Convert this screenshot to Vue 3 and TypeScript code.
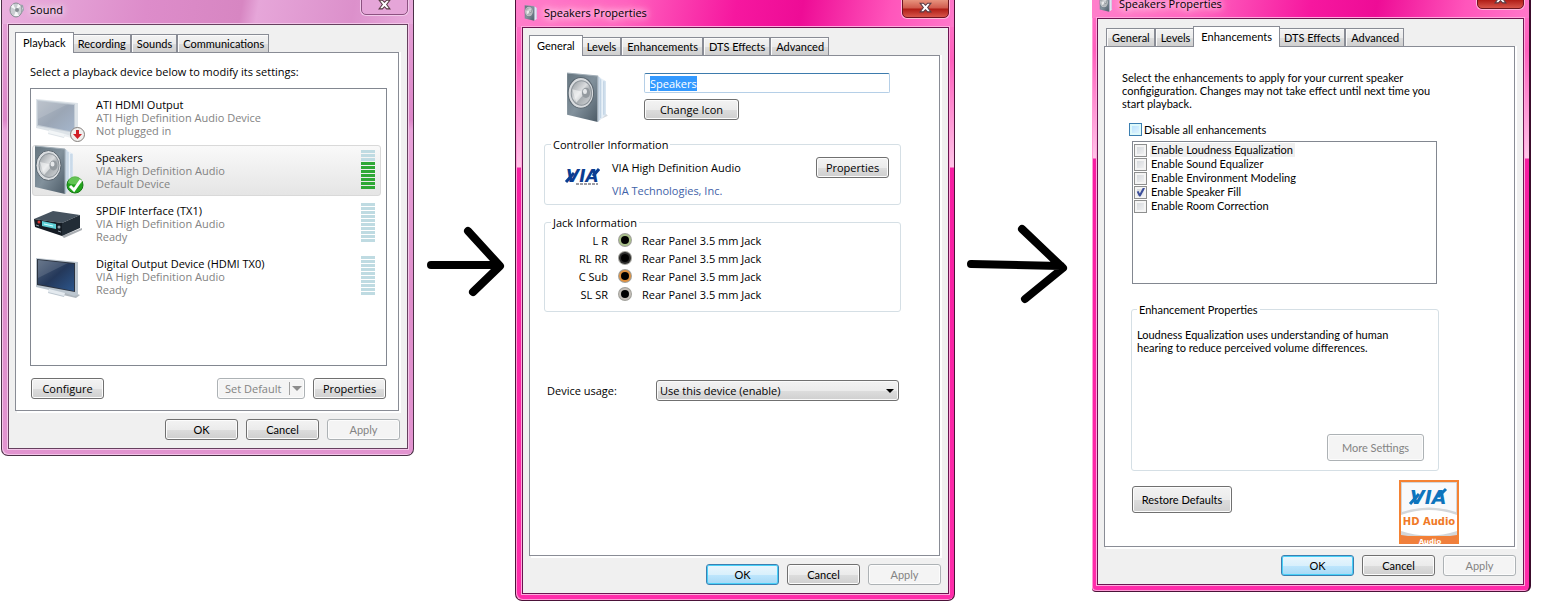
<script setup lang="ts">
import { onMounted, ref } from 'vue'

type Theme = 'orchid' | 'hot'
type Body = 'playback' | 'general' | 'enhancements'
interface Dialog { id: Body; title: string; theme: Theme; tabs: string[]; active: string; ready: boolean }
interface Device { icon: string; name: string; driver: string; state: string; level: number | null; selected?: boolean }

const propertyTabs = ['General', 'Levels', 'Enhancements', 'DTS Effects', 'Advanced']
const dialogs: Dialog[] = [
  { id: 'playback', title: 'Sound', theme: 'orchid', tabs: ['Playback', 'Recording', 'Sounds', 'Communications'], active: 'Playback', ready: false },
  { id: 'general', title: 'Speakers Properties', theme: 'hot', tabs: propertyTabs, active: 'General', ready: true },
  { id: 'enhancements', title: 'Speakers Properties', theme: 'hot', tabs: propertyTabs, active: 'Enhancements', ready: true },
]
const devices: Device[] = [
  { icon: 'unplugged', name: 'ATI HDMI Output', driver: 'ATI High Definition Audio Device', state: 'Not plugged in', level: null },
  { icon: 'speaker', name: 'Speakers', driver: 'VIA High Definition Audio', state: 'Default Device', level: 7, selected: true },
  { icon: 'receiver', name: 'SPDIF Interface (TX1)', driver: 'VIA High Definition Audio', state: 'Ready', level: 0 },
  { icon: 'monitor', name: 'Digital Output Device (HDMI TX0)', driver: 'VIA High Definition Audio', state: 'Ready', level: 0 },
]
const jacks = [
  { label: 'L R', color: '#a9c08a' },
  { label: 'RL RR', color: '#2b2b2b' },
  { label: 'C Sub', color: '#e0913f' },
  { label: 'SL SR', color: '#c4beb8' },
]
const effects = ref([
  { name: 'Enable Loudness Equalization', on: false },
  { name: 'Enable Sound Equalizer', on: false },
  { name: 'Enable Environment Modeling', on: false },
  { name: 'Enable Speaker Fill', on: true },
  { name: 'Enable Room Correction', on: false },
])
const disableAll = ref(false)
const deviceName = ref('Speakers')
const usage = ref('enable')
const nameBox = ref<HTMLInputElement[]>([])

onMounted(() => {
  const box = nameBox.value[0]
  box?.focus()
  box?.select()
})
</script>

<template>
  <svg class="defs" aria-hidden="true">
    <defs>
      <linearGradient id="face" x1="0" y1="0" x2="1" y2="1">
        <stop offset="0" stop-color="#65757f" /><stop offset=".5" stop-color="#82919c" /><stop offset="1" stop-color="#4c5b67" />
      </linearGradient>
      <linearGradient id="side" x1="0" y1="0" x2="1" y2="0">
        <stop offset="0" stop-color="#b9cbdc" /><stop offset=".5" stop-color="#eef5fb" /><stop offset="1" stop-color="#cfdeec" />
      </linearGradient>
      <linearGradient id="cone" x1="0" y1="0" x2="1" y2="1">
        <stop offset="0" stop-color="#8f959a" /><stop offset=".45" stop-color="#dcdee0" /><stop offset=".6" stop-color="#a9aeb2" /><stop offset="1" stop-color="#d6d8da" />
      </linearGradient>
      <linearGradient id="screen" x1="0" y1="0" x2="1" y2="1">
        <stop offset="0" stop-color="#54657c" /><stop offset=".5" stop-color="#24385a" /><stop offset="1" stop-color="#2c568c" />
      </linearGradient>
      <linearGradient id="pale" x1="0" y1="0" x2="1" y2="1">
        <stop offset="0" stop-color="#b3bbc5" /><stop offset=".5" stop-color="#9ba6b5" /><stop offset="1" stop-color="#a5b6cc" />
      </linearGradient>
    </defs>
    <symbol id="speaker-art" viewBox="0 0 42 50">
      <path d="M32 47l9-4-2-2z" fill="#d5d9dd" />
      <path d="M31 4l8 5v33l-8 7z" fill="url(#side)" />
      <path d="M34 7v38M37 9v33" stroke="#b9cde0" fill="none" />
      <path d="M1 1l30 3v45L1 42z" fill="url(#face)" />
      <path d="M1 1l30 3v45" fill="none" stroke="#a3afb8" />
      <ellipse cx="14.5" cy="20.5" rx="12.5" ry="15" fill="#d9dcdf" stroke="#59656f" />
      <ellipse cx="15" cy="20.5" rx="10" ry="12" fill="url(#cone)" stroke="#8d949a" />
      <path d="M6 17l13 3-9 10z" fill="#fff" opacity=".5" />
      <ellipse cx="19.5" cy="20.5" rx="4" ry="5" fill="#949a9f" />
      <ellipse cx="18.5" cy="19" rx="2" ry="2.5" fill="#e6e8ea" />
    </symbol>
  </svg>

  <main class="board">
    <template v-for="(d, n) in dialogs" :key="d.id">
      <svg v-if="n === 1" class="arrow" viewBox="414 225 101 75" aria-hidden="true">
        <path d="M431 265h66M468 231l32 35-27 26" />
      </svg>
      <svg v-if="n === 2" class="arrow second" viewBox="955 222 137 85" aria-hidden="true">
        <path d="M971 264l90 2M1022 229l41 39-38 31" />
      </svg>

      <section class="window" :class="[d.theme, d.id]" :aria-label="d.title">
        <header class="title">
          <svg v-if="d.id === 'playback'" class="title-icon" viewBox="0 0 16 16" aria-hidden="true">
            <path d="M9 2l5 1 1 5-3 4-4 1z" fill="#9aa3ab" /><path d="M11 4l3 2-1 4-3 2z" fill="#e9eef2" />
            <ellipse cx="7" cy="8" rx="6" ry="7" fill="#c9cdd1" stroke="#8a9096" />
            <path d="M7 8L2 5l2-3zM7 8l5-4-3-2zM7 8l3 6H5z" fill="#f6f7f8" /><circle cx="8" cy="8" r="2" fill="#868d93" />
          </svg>
          <svg v-else class="title-icon" viewBox="0 0 42 50" aria-hidden="true"><use href="#speaker-art" /></svg>
          <h1>{{ d.title }}</h1>
          <button class="close" type="button" aria-label="Close">
            <svg viewBox="0 0 12 10"><path d="M1 1h3l2 2 2-2h3L8 5l3 4H8L6 7 4 9H1l3-4z" /></svg>
          </button>
        </header>

        <div class="client">
          <div class="tabs" role="tablist">
            <button v-for="t in d.tabs" :key="t" class="tab" :class="{ active: t === d.active }" type="button" role="tab" :aria-selected="t === d.active">{{ t }}</button>
          </div>

          <div v-if="d.id === 'playback'" class="panel sound-panel">
            <p>Select a playback device below to modify its settings:</p>
            <ul class="devices">
              <li v-for="dev in devices" :key="dev.name" class="device" :class="{ selected: dev.selected }">
                <svg class="device-icon" viewBox="0 0 52 50" aria-hidden="true">
                  <template v-if="dev.icon === 'monitor' || dev.icon === 'unplugged'">
                    <path d="M16 36l22 5 8 3-4 3-26-6z" :fill="dev.icon === 'monitor' ? '#8c97a1' : '#e6eaee'" opacity=".7" />
                    <path d="M2 7l42 4v33l-4 1-9-3-1 4-16-4 1-3-13-3z" :fill="dev.icon === 'monitor' ? '#bcc6cf' : '#dde3e8'" />
                    <path d="M15 38l16 4-1 3-16-4z" :fill="dev.icon === 'monitor' ? '#e4eaef' : '#f2f5f7'" />
                    <path d="M3 8l38 4v29L3 34z" :fill="dev.icon === 'monitor' ? '#2b3340' : '#c3ccd5'" />
                    <path d="M4 9l36 4v27L4 33z" :fill="dev.icon === 'monitor' ? 'url(#screen)' : 'url(#pale)'" />
                    <path d="M4 9l30 3L4 27z" fill="#fff" opacity=".12" />
                  </template>
                  <template v-if="dev.icon === 'unplugged'">
                    <circle cx="43.5" cy="42.5" r="7" fill="#f0efee" stroke="#85807d" />
                    <path d="M42 38h3v4h3l-4.500 5-4.500-5h3z" fill="#d01f26" />
                  </template>
                  <template v-if="dev.icon === 'speaker'">
                    <use href="#speaker-art" width="42" height="50" />
                    <circle cx="41" cy="40" r="8" fill="#22a31c" stroke="#157a14" />
                    <path d="M34 38a7 7 0 0 1 14 0q-7 3-14 0z" fill="#8fdc7a" opacity=".6" />
                    <path d="M36 41l4 4 7-10" fill="none" stroke="#fff" stroke-width="3" />
                  </template>
                  <template v-if="dev.icon === 'receiver'">
                    <path d="M28 38l20-8v2l-18 8z" fill="#a9adb2" />
                    <path d="M0 21l19-8 27 4-18 8z" fill="#46535f" />
                    <path d="M28 25l18-8v13l-18 8z" fill="#222c36" />
                    <path d="M0 21l28 4v13L1 29z" fill="#151c24" />
                    <path d="M8 23l14 3v5L8 28z" fill="#5fcfd6" />
                    <path d="M10 26l9 2" stroke="#d9ffff" />
                    <circle cx="5" cy="24" r="1.500" fill="#d8352f" /><circle cx="25" cy="29" r="1.500" fill="#8d9aa5" />
                    <path d="M2 27l3 1M24 33l3 1" stroke="#8d9aa5" />
                  </template>
                </svg>
                <div class="device-text">
                  <strong>{{ dev.name }}</strong><span>{{ dev.driver }}</span><span>{{ dev.state }}</span>
                </div>
                <div v-if="dev.level !== null" class="meter" role="img" aria-label="Output level">
                  <i v-for="b in 10" :key="b" :class="{ lit: b > 10 - dev.level }"></i>
                </div>
              </li>
            </ul>
            <div class="sound-actions">
              <button class="btn" type="button">Configure</button>
              <button class="btn split" type="button" disabled>
                <span>Set Default</span><svg viewBox="0 0 10 6"><path d="M0 0h10L5 5z" /></svg>
              </button>
              <button class="btn" type="button">Properties</button>
            </div>
          </div>

          <div v-if="d.id === 'general'" class="panel general-panel">
            <div class="identity">
              <svg class="big-icon" viewBox="0 0 42 50" aria-hidden="true"><use href="#speaker-art" /></svg>
              <div class="naming">
                <input ref="nameBox" v-model="deviceName" type="text" aria-label="Device name" />
                <button class="btn change" type="button">Change Icon</button>
              </div>
            </div>
            <fieldset class="controller">
              <legend>Controller Information</legend>
              <div class="controller-row">
                <svg class="via" viewBox="0 0 36 22" role="img" aria-label="VIA">
                  <path d="M2 16l8-9M29 10l6-7" stroke="currentColor" stroke-width="3" />
                  <text x="2" y="16" font-size="17" fill="currentColor">VIA</text>
                  <path d="M12 18h22" stroke="#3c3c4a" stroke-dasharray="3 1" />
                </svg>
                <div class="controller-text">
                  <span>VIA High Definition Audio</span>
                  <a href="#">VIA Technologies, Inc.</a>
                </div>
                <button class="btn" type="button">Properties</button>
              </div>
            </fieldset>
            <fieldset class="jacks">
              <legend>Jack Information</legend>
              <div v-for="j in jacks" :key="j.label" class="jack">
                <span class="jack-label">{{ j.label }}</span>
                <svg viewBox="0 0 16 16" aria-hidden="true">
                  <circle cx="8" cy="8" r="7" fill="#77776f" opacity=".7" /><circle cx="8" cy="8" r="6" :fill="j.color" /><circle cx="8" cy="8" r="4" fill="#000" />
                </svg>
                <span>Rear Panel 3.5 mm Jack</span>
              </div>
            </fieldset>
            <div class="usage">
              <label for="usage">Device usage:</label>
              <div class="combo">
                <select id="usage" v-model="usage">
                  <option value="enable">Use this device (enable)</option>
                  <option value="disable">Don't use this device (disable)</option>
                </select>
                <svg viewBox="0 0 8 4" aria-hidden="true"><path d="M0 0h8L4 4z" /></svg>
              </div>
            </div>
          </div>

          <div v-if="d.id === 'enhancements'" class="panel fx-panel">
            <p>Select the enhancements to apply for your current speaker<br />configiguration. Changes may not take effect until next time you<br />start playback.</p>
            <label class="disable-all"><input v-model="disableAll" class="hot-box" type="checkbox" />Disable all enhancements</label>
            <ul class="effects">
              <li v-for="(e, i) in effects" :key="e.name">
                <label><input v-model="e.on" type="checkbox" /><span :class="{ current: i === 0 }">{{ e.name }}</span></label>
              </li>
            </ul>
            <fieldset class="fx-props">
              <legend>Enhancement Properties</legend>
              <p>Loudness Equalization uses understanding of human<br />hearing to reduce perceived volume differences.</p>
              <button class="btn tall" type="button" disabled>More Settings</button>
            </fieldset>
            <div class="fx-foot">
              <button class="btn tall restore" type="button">Restore Defaults</button>
              <svg class="hd" viewBox="0 0 60 64" role="img" aria-label="VIA HD Audio">
                <path d="M0 0h60v64H0z" fill="#f58233" />
                <path d="M2 2h56v54H2z" fill="#d3d6d9" />
                <path d="M3 3h54v29q-27-9-54 0z" fill="#f8f9fb" />
                <path d="M2 35q28-10 56 0v16q-28 9-56 0z" fill="#fff" />
                <path d="M2 55q28 5 56 0v9H2z" fill="#f07f3c" />
                <path d="M11 24l9-10M39 17l8-8" stroke="#0d74bd" stroke-width="3" />
                <text class="mark" x="11" y="24" font-size="19" fill="#0d74bd">VIA</text>
                <text x="30" y="45" text-anchor="middle" font-size="10" fill="#f07a28">HD Audio</text>
                <text x="31" y="64" text-anchor="middle" font-size="7" fill="#fff">Audio</text>
              </svg>
            </div>
          </div>

          <footer class="footer">
            <button class="btn" :class="{ primary: d.ready }" type="button">OK</button>
            <button class="btn" type="button">Cancel</button>
            <button class="btn" type="button" disabled>Apply</button>
          </footer>
        </div>
      </section>
    </template>
  </main>
</template>

<style>
body { margin: 0; background: #fff; }
</style>

<style scoped>
.defs { position: absolute; width: 0; height: 0; }
.board {
  --ui: "Lato", "Liberation Sans", sans-serif;
  --body: "Open Sans", "Noto Sans", sans-serif;
  display: grid;
  grid-template-columns: 413fr 101fr 440fr 137fr 439fr;
  align-items: start;
  padding: 0 18px 0 1px;
  font: 11px/13px var(--body);
  color: #000;
}
p, h1, ul { margin: 0; padding: 0; list-style: none; }
button, input, select { font: inherit; color: inherit; box-sizing: border-box; }
.arrow { width: 100%; margin-top: 225px; fill: none; stroke: #000; stroke-width: 8; stroke-linecap: round; stroke-linejoin: round; }
.arrow.second { margin-top: 222px; }

.window { box-sizing: border-box; min-width: 0; padding: 0 5px 6px 6px; border: 1px solid #4b1238; border-top: 0; border-radius: 0 0 7px 7px; overflow: hidden; }
.orchid { border-color: #4a3046; background: linear-gradient(#e6a4d8, #dc86c8 120px, #e8a2d9 130px, #df8ecb 300px, #e294d0); box-shadow: inset 1px -1px 0 #f3c4e8; }
.hot { background: linear-gradient(#ff78ca, #ff5fbd 60px, #ffc4e8 167px, #f71da2 168px, #ff2caa); box-shadow: inset 1px -1px 0 #ff9bd6; }
.enhancements { padding-left: 5px; border-left: 0; border-right: 2px solid #3c0c2c; border-radius: 0 0 6px 4px; background: linear-gradient(#ff70c6, #ff5fbd 50px, #ffc4e8 158px, #f71da2 159px, #ff2caa); }
.title { display: flex; align-items: flex-end; gap: 5px; box-sizing: border-box; height: 27px; margin: 0 -5px 0 -6px; padding: 0 5px 0 7px; }
.playback .title { height: 24px; background: linear-gradient(100deg, #e9b0de, #dd8cca 35%, #d786c2 58%, #e6a6d9 62%, #dc90cb 85%, #e8abdc); }
.hot .title { background: linear-gradient(100deg, #ff7fcb, #ff62bf 25%, #f6179f 50%, #ee0c96 65%, #ff55bb 85%, #ff78ca); }
.enhancements .title { height: 18px; margin-left: -5px; padding-left: 6px; }
.title-icon { flex: none; width: 16px; height: 16px; margin-bottom: 6px; }
h1 { flex: 1; padding-bottom: 8px; font-size: 11px; font-weight: 400; line-height: 13px; white-space: nowrap; text-shadow: 0 0 6px #fff, 0 0 9px #ffffffb0, 0 0 12px #ffffffb0; }
.close { flex: none; display: flex; align-items: flex-end; justify-content: center; width: 47px; height: 22px; margin-bottom: 9px; padding: 0 0 4px; border: 1px solid #6d1520; border-radius: 0 0 5px 5px; background: linear-gradient(#f0a890, #d05a4c 55%, #b01d16 60%, #d8554a); box-shadow: 0 0 0 1px #ffb8d8; }
.close svg { width: 13px; height: 11px; fill: #fff; stroke: #5b3d46; stroke-width: 1; }
.playback .close { border-color: #8b5280; background: #e5a5d8; box-shadow: 0 0 0 1px #f2c9ea; }

.client { border: 1px solid #6b1450; background: #f0f0f0; box-shadow: 0 0 0 1px #ffa8dc; }
.playback .client { border-color: #66405f; box-shadow: 0 0 0 1px #f3c6e9; }
.tabs { display: flex; align-items: flex-end; height: 20px; margin: 7px 8px 0 6px; padding-left: 2px; font-family: var(--ui); }
.tab { height: 18px; padding: 0 4px 0 5px; border: 1px solid #898c95; border-bottom: 0; background: linear-gradient(#f3f3f3, #ebebeb 50%, #dddddd 51%, #cfcfcf); box-shadow: inset 1px 1px 0 #fbfbfb; white-space: nowrap; }
.tab.active { position: relative; height: 21px; margin: 0 -2px -1px; padding: 0 7px 1px; background: #fff; box-shadow: none; }
.panel { box-sizing: border-box; min-height: 501px; margin: 0 8px 0 6px; border: 1px solid #898c95; background: #fff; box-shadow: 2px 0 0 #fff, 2px 2px 0 #fff; }
.footer { display: flex; justify-content: flex-end; gap: 8px; padding: 8px 7px; font-family: var(--ui); }

.btn { min-width: 73px; height: 21px; padding: 0 4px; border: 1px solid #707070; border-radius: 3px; background: linear-gradient(#f3f3f3, #ebebeb 50%, #dddddd 51%, #cfcfcf); box-shadow: inset 0 0 0 1px #fcfcfc; white-space: nowrap; }
.btn:disabled { border-color: #adb2b5; background: #f4f4f4; color: #838383; }
.btn.primary { border-color: #3c7fb1; background: linear-gradient(#eaf6fd, #d9f0fc 50%, #bee6fd 51%, #a7d9f5); box-shadow: inset 0 0 0 1px #48d0f8; }
.btn.tall { height: 27px; min-width: 97px; }

.sound-panel { min-height: 359px; padding: 12px 11px 11px 14px; }
.devices { box-sizing: border-box; min-height: 278px; margin-top: 10px; padding: 3px 5px 0 1px; border: 1px solid #828790; }
.device { display: flex; align-items: flex-start; box-sizing: border-box; height: 51px; margin-bottom: 2px; padding: 0 5px 0 1px; border: 1px solid transparent; border-radius: 3px; }
.device.selected { border-color: #d9d9d9; background: linear-gradient(#f9f9f9, #e5e5e5); }
.device-icon { flex: none; width: 52px; height: 50px; margin-top: -1px; }
.device-text { flex: 1; display: flex; flex-direction: column; padding: 5px 0 0 10px; color: #838383; }
.device-text strong { font-weight: 400; color: #000; }
.meter { display: flex; flex-direction: column; gap: 1px; width: 14px; padding-top: 4px; }
.meter i { height: 3px; background: #bfdbe2; }
.meter i.lit { background: #2fa836; }
.sound-actions { display: flex; gap: 8px; margin-top: 12px; padding: 0 1px; }
.split { display: flex; align-items: center; margin-left: auto; width: 88px; padding: 0 2px 0 7px; }
.split span { flex: 1; padding-right: 3px; text-align: left; border-right: 1px solid #a0a0a0; }
.split svg { width: 10px; height: 6px; margin-left: 2px; fill: #8c8c8c; }

.general-panel { padding: 16px 38px 0 14px; }
.identity { display: flex; gap: 35px; padding-left: 22px; }
.big-icon { flex: none; width: 43px; height: 51px; }
.naming { flex: 1; display: flex; flex-direction: column; align-items: flex-start; gap: 6px; margin-right: 11px; padding-top: 1px; }
.naming input { width: 100%; height: 20px; padding: 0 5px; border: 1px solid #b5cfe7; border-top-color: #3d7bad; border-radius: 2px; outline: 0; background: #fff; }
.naming input::selection { background: #3399ff; color: #fff; }
.change { width: 95px; }
fieldset { min-width: 0; box-sizing: border-box; margin: 0; padding: 0 11px 7px 6px; border: 1px solid #d5dfe5; border-radius: 3px; }
legend { padding: 0 2px; line-height: 13px; }
.controller { margin-top: 15px; }
.controller-row { display: flex; align-items: flex-start; padding: 1px 0 0 13px; }
.via { width: 36px; height: 22px; margin: 14px 12px 0 0; color: #0b3d91; font-family: "DejaVu Sans", sans-serif; font-weight: 700; font-style: italic; }
.controller-text { flex: 1; display: flex; flex-direction: column; gap: 10px; padding-top: 9px; }
.controller-text a { color: #3f62a8; text-decoration: none; }
.controller-row .btn { margin-top: 5px; }
.jacks { margin-top: 11px; padding-bottom: 8px; }
.jack { display: flex; align-items: center; gap: 9px; height: 18px; }
.jacks legend { margin-bottom: 2px; }
.jack-label { width: 57px; text-align: right; }
.jack svg { width: 16px; height: 16px; }
.usage { display: flex; align-items: center; margin: 68px 2px 0 0; padding-left: 3px; }
.usage label { flex: none; width: 109px; }
.combo { flex: 1; display: grid; align-items: center; }
.combo select, .combo svg { grid-area: 1 / 1; }
.combo select { appearance: none; width: 100%; height: 21px; padding: 0 3px; border: 1px solid #707070; border-radius: 3px; background: linear-gradient(#f2f2f2, #ebebeb 50%, #dddddd 51%, #cfcfcf); box-shadow: inset 0 0 0 1px #fafafa; }
.combo svg { justify-self: end; width: 8px; height: 4px; margin-right: 5px; pointer-events: none; }

.fx-panel { padding: 24px 75px 0 17px; font-family: var(--ui); }
.fx-panel > p { white-space: nowrap; }
.disable-all { display: flex; align-items: center; gap: 2px; margin-top: 13px; padding-left: 7px; }
input[type="checkbox"] { appearance: none; flex: none; display: grid; place-items: center; width: 13px; height: 13px; margin: 0; border: 1px solid #8e8f8f; background: linear-gradient(135deg, #cfd3d8, #f6f6f6); box-shadow: inset 0 0 0 2px #f4f4f4; }
input.hot-box { border-color: #3c7fb1; background: linear-gradient(135deg, #b1dffd, #e9f7fe); box-shadow: inset 0 0 0 2px #def9fa; }
input[type="checkbox"]:checked::after { content: ""; width: 9px; height: 9px; background: #3d4f9b; clip-path: polygon(8% 48%, 28% 40%, 42% 66%, 78% 0, 100% 8%, 50% 100%, 34% 100%); }
.effects { box-sizing: border-box; min-height: 143px; margin: 5px 2px 0 10px; padding: 1px; border: 1px solid #828790; }
.effects li { height: 14px; }
.effects label { display: flex; align-items: center; gap: 3px; height: 14px; }
.effects span { padding: 0 2px 0 1px; line-height: 14px; }
.effects .current { background: #f0f0f0; }
.fx-props { margin: 19px 0 0 9px; padding: 0 14px 9px 5px; text-align: right; }
.fx-props legend { text-align: left; }
.fx-props p { margin-top: 12px; text-align: left; white-space: nowrap; }
.fx-props .btn { margin-top: 80px; }
.fx-foot { display: flex; justify-content: space-between; align-items: flex-start; margin: 9px -20px 0 10px; }
.btn.restore { min-width: 100px; margin-top: 6px; }
.hd { width: 60px; height: 64px; font-family: "DejaVu Sans", sans-serif; font-weight: 700; }
.mark { font-style: italic; }
</style>
